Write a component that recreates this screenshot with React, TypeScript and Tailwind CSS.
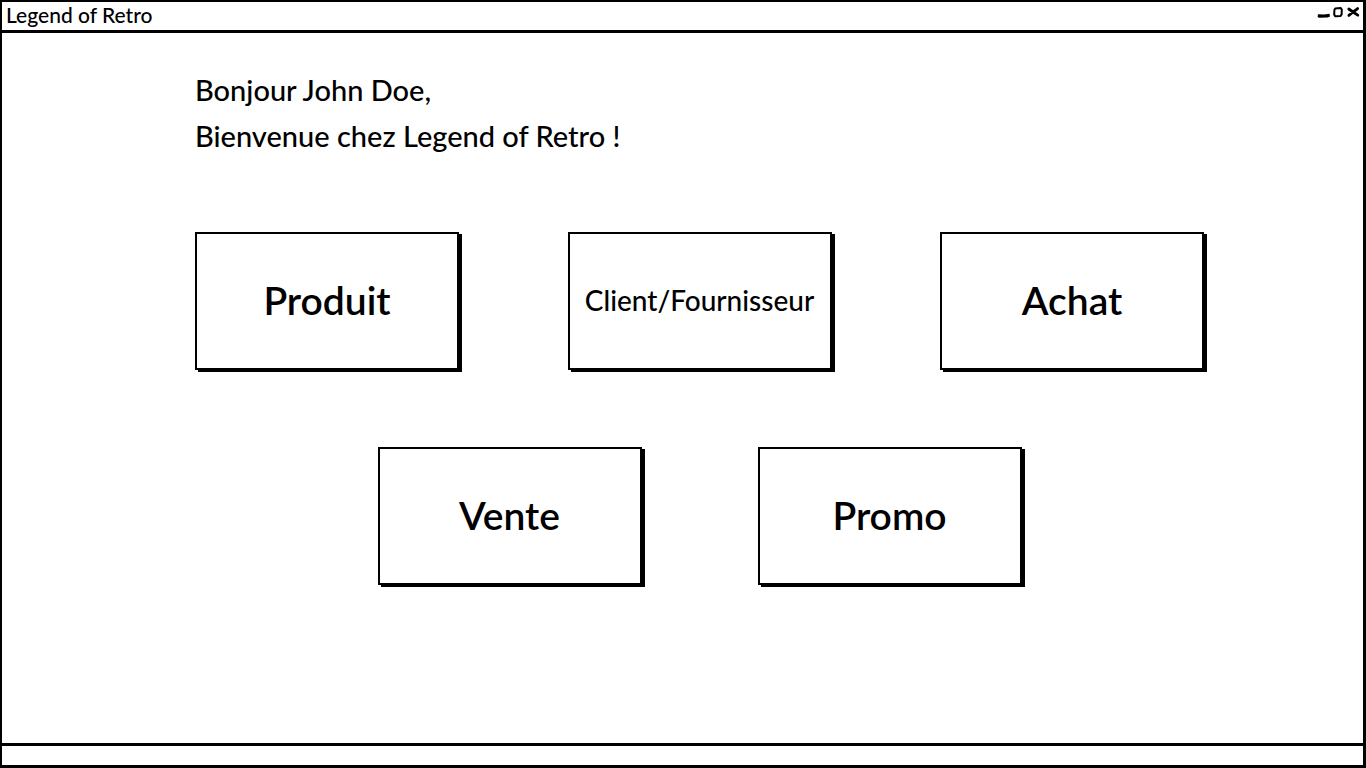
const topCards = [
  { label: 'Produit', text: 'text-[39px] font-semibold' },
  { label: 'Client/Fournisseur', text: 'text-[28px] font-medium' },
  { label: 'Achat', text: 'text-[39px] font-semibold' },
];

const bottomCards = [
  { label: 'Vente', text: 'text-[39px] font-semibold' },
  { label: 'Promo', text: 'text-[39px] font-semibold' },
];

function Card({ label, text }: { label: string; text: string }) {
  return (
    <button
      type="button"
      className={`h-[138px] w-[264px] shrink-0 border-2 border-black bg-white pb-[2px] shadow-[3px_2px_0_#000] ${text}`}
    >
      {label}
    </button>
  );
}

export default function App() {
  return (
    <div className="flex min-h-screen flex-col border-2 border-r-[3px] border-b-[3px] border-black bg-white font-['Lato',sans-serif] text-black">
      <header className="flex h-[31px] items-start justify-between border-b-[3px] border-black pl-1">
        <h1 className="text-[21px] leading-[26px] font-medium">Legend of Retro</h1>
        <div className="flex pt-1 pr-[2px]">
          <button type="button" aria-label="Réduire">
            <svg width="16" height="14" viewBox="0 0 16 14">
              <path d="M3 8.3 9 8.5 14.5 7.8 15 10.6 12.5 11.6 4 11.8 2.6 11Z" />
            </svg>
          </button>
          <button type="button" aria-label="Agrandir">
            <svg width="14" height="14" viewBox="0 0 14 14" fill="none" stroke="#000" strokeWidth="2" strokeLinejoin="round">
              <path d="M4.2 2.4 9.6 1.9 10.8 3.5 10.6 8.6 9.4 10 4.2 10.2 3.2 8.4 3.4 4Z" />
            </svg>
          </button>
          <button type="button" aria-label="Fermer">
            <svg width="16" height="14" viewBox="0 0 16 14" fill="none" stroke="#000" strokeWidth="2.8" strokeLinecap="round">
              <path d="M3.8 3 8 6 12.8 9.2M12.6 2.6 8 6 3.9 9.4" />
            </svg>
          </button>
        </div>
      </header>

      <main className="flex-1 pt-[34px] pr-[159px] pl-[193px]">
        <div className="text-[29px] leading-[46px] font-medium">
          <p>Bonjour John Doe,</p>
          <p>Bienvenue chez Legend of Retro !</p>
        </div>
        <nav aria-label="Menu principal" className="mt-[73px] flex flex-col gap-[77px]">
          <div className="flex justify-between">
            {topCards.map((c) => (
              <Card key={c.label} {...c} />
            ))}
          </div>
          <div className="flex justify-center gap-[116px]">
            {bottomCards.map((c) => (
              <Card key={c.label} {...c} />
            ))}
          </div>
        </nav>
      </main>

      <footer className="h-[22px] border-t-[3px] border-black" />
    </div>
  );
}
